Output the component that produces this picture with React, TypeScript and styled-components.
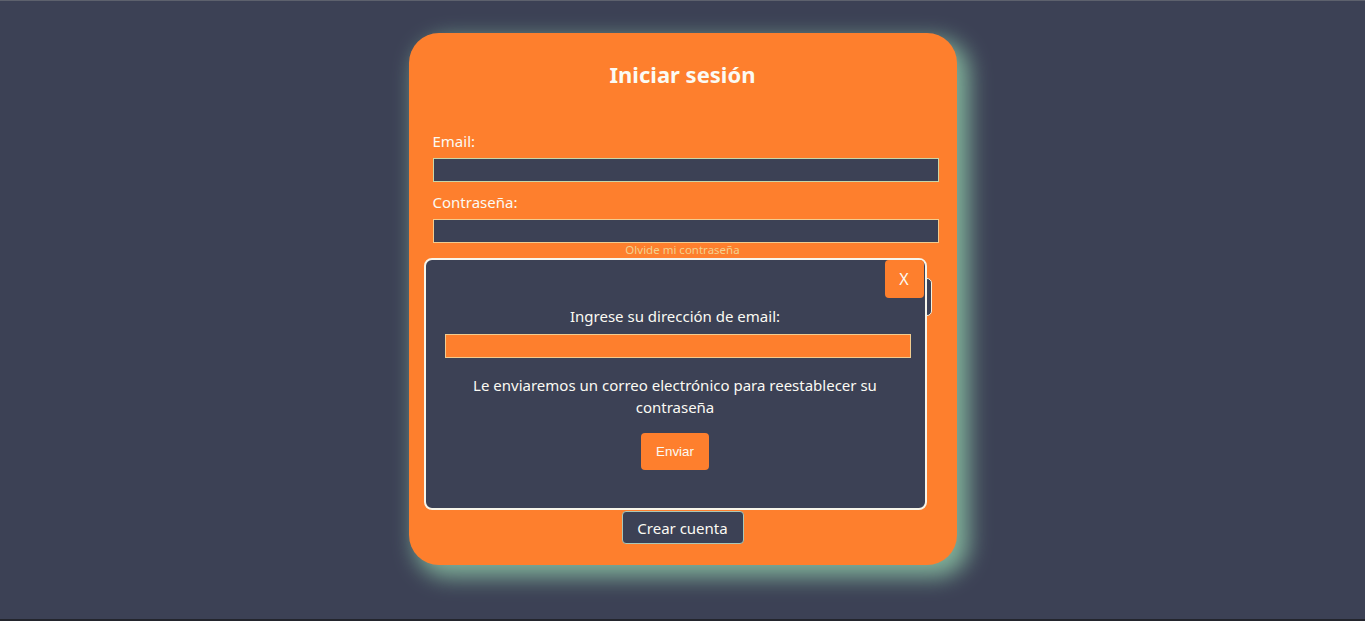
import React from "react";
import styled, { createGlobalStyle } from "styled-components";

const Global = createGlobalStyle`
  html, body { margin: 0; padding: 0; }
  body { background: #3c4155; font-family: "Noto Sans", "Open Sans", sans-serif; }
  * { box-sizing: border-box; }
`;

const Page = styled.div`
  height: 621px;
  border-top: 1px solid #5d616d;
  border-bottom: 2px solid #23252d;
  background: #3c4155;
  display: flex;
  justify-content: center;
  padding-top: 32px;
  overflow: hidden;
`;

const Card = styled.form`
  position: relative;
  width: 548px;
  height: 532px;
  background: #fe7f2d;
  border-radius: 30px;
  box-shadow: 9px 9px 22px 3px #81b29a;
  padding: 27px 24px 21px 24px;
  display: flex;
  flex-direction: column;
  align-items: stretch;
`;

const Title = styled.h2`
  margin: 0;
  font-size: 22px;
  line-height: 29px;
  font-weight: 700;
  color: #fbfaf3;
  text-align: center;
`;

const Label = styled.label<{ $top: number }>`
  display: block;
  margin-top: ${(p) => p.$top}px;
  font-size: 15px;
  line-height: 22px;
  color: #fbfaf3;
`;

const Field = styled.input<{ $border: string }>`
  display: block;
  width: 506px;
  height: 24px;
  margin-top: 6px;
  background: #3c4155;
  border: 1px solid ${(p) => p.$border};
  outline: none;
  padding: 1px 2px;
`;

const Forgot = styled.a`
  display: block;
  text-align: center;
  font-size: 11.5px;
  line-height: 14px;
  color: #f2d28f;
  text-decoration: none;
`;

const Submit = styled.button`
  margin-top: 21px;
  width: 499px;
  height: 38px;
  background: #3c4155;
  border: 1px solid #f4f1de;
  border-radius: 5px;
  color: #f4f1de;
  font-family: inherit;
  font-size: 16px;
`;

const Create = styled.button`
  margin-top: auto;
  align-self: center;
  width: 122px;
  height: 33px;
  background: #3c4155;
  border: 1px solid #a9c7b8;
  border-radius: 4px;
  color: #fbfaf3;
  font-family: inherit;
  font-size: 15px;
  padding: 0;
`;

const Modal = styled.div`
  position: absolute;
  left: 15px;
  top: 225px;
  width: 503px;
  height: 252px;
  background: #3c4155;
  border: 2px solid #f7f5ea;
  border-radius: 8px;
  padding: 45px 14px 0 14px;
  display: flex;
  flex-direction: column;
  align-items: center;
`;

const Close = styled.button`
  position: absolute;
  top: 0;
  right: 1px;
  width: 39px;
  height: 38px;
  background: #fe7f2d;
  border: none;
  border-radius: 4px;
  color: #fbfaf3;
  font-family: inherit;
  font-size: 16px;
  padding: 0;
`;

const ModalText = styled.p<{ $top: number }>`
  margin: ${(p) => p.$top}px 0 0 0;
  max-width: 440px;
  text-align: center;
  font-size: 15px;
  line-height: 22px;
  color: #fbfaf3;
`;

const OrangeField = styled.input`
  display: block;
  width: 466px;
  height: 24px;
  margin: 7px 0 0 6px;
  background: #fe7f2d;
  border: 1px solid #f2cc8f;
  outline: none;
`;

const Send = styled.button`
  margin-top: 15px;
  width: 68px;
  height: 37px;
  background: #fe7f2d;
  border: none;
  border-radius: 4px;
  color: #fbfaf3;
  font-family: "Liberation Sans", Arial, sans-serif;
  font-size: 13.33px;
  padding: 0;
`;

export default function App() {
  return (
    <>
      <Global />
      <Page>
        <Card onSubmit={(e) => e.preventDefault()}>
          <Title>Iniciar sesión</Title>
          <Label $top={41}>Email:</Label>
          <Field type="email" $border="#c9d6a8" />
          <Label $top={9}>Contraseña:</Label>
          <Field type="password" $border="#f2cc8f" />
          <Forgot href="#">Olvide mi contraseña</Forgot>
          <Submit type="submit">Ingresar</Submit>
          <Create type="button">Crear cuenta</Create>
          <Modal>
            <Close type="button">X</Close>
            <ModalText $top={0}>Ingrese su dirección de email:</ModalText>
            <OrangeField type="email" />
            <ModalText $top={16}>
              Le enviaremos un correo electrónico para reestablecer su contraseña
            </ModalText>
            <Send type="button">Enviar</Send>
          </Modal>
        </Card>
      </Page>
    </>
  );
}
